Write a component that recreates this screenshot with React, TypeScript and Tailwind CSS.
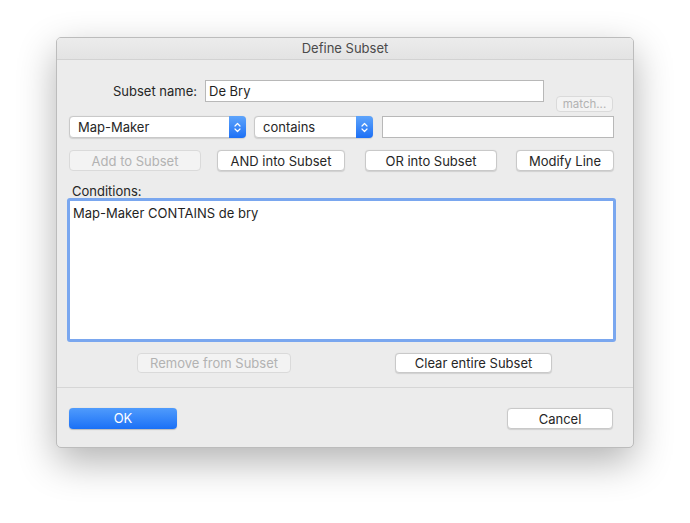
import React from "react";

function Btn({
  className = "",
  disabled = false,
  children,
}: {
  className?: string;
  disabled?: boolean;
  children: React.ReactNode;
}) {
  return (
    <div
      className={`flex items-center justify-center rounded-[4px] border pt-px leading-none ${
        disabled
          ? "border-[#dadada] bg-[#f3f3f3] text-[#b2b2b2]"
          : "border-[#c9c9c9] bg-white text-[#262626] shadow-[0_0.5px_1px_rgba(0,0,0,0.12)]"
      } ${className}`}
    >
      {children}
    </div>
  );
}

function Chevrons() {
  return (
    <svg width="7" height="11" viewBox="0 0 7 11" fill="none">
      <path d="M1 4 L3.5 1.5 L6 4" stroke="white" strokeWidth="1.2" strokeLinecap="round" strokeLinejoin="round" />
      <path d="M1 7 L3.5 9.5 L6 7" stroke="white" strokeWidth="1.2" strokeLinecap="round" strokeLinejoin="round" />
    </svg>
  );
}

function Popup({ className = "", label }: { className?: string; label: string }) {
  return (
    <div
      className={`flex h-[22px] items-stretch rounded-[4px] border border-[#c9c9c9] bg-white shadow-[0_0.5px_1px_rgba(0,0,0,0.12)] ${className}`}
    >
      <div className="flex flex-1 items-center pl-[8px] pt-px text-[13px] text-[#262626]">{label}</div>
      <div className="-my-px -mr-px flex w-[17px] items-center justify-center rounded-r-[4px] bg-gradient-to-b from-[#5ea4fb] to-[#1b6ff5]">
        <Chevrons />
      </div>
    </div>
  );
}

export default function App() {
  return (
    <div className="h-[523px] w-[690px] bg-white pl-[56px] pt-[37px] font-['Inter','Liberation_Sans',sans-serif] text-[13px]">
      <div className="flex h-[411px] w-[578px] flex-col overflow-hidden rounded-[5px] border border-[#bcbcbc] bg-[#ececec] shadow-[0_14px_38px_rgba(0,0,0,0.3)]">
        <div className="flex h-[22px] items-center justify-center border-b border-[#d2d2d2] bg-gradient-to-b from-[#ececec] to-[#e3e3e3] pt-px text-[13px] text-[#4a4a4a]">
          Define Subset
        </div>

        <div className="flex flex-col pl-[12px] pr-[19px]">
          <div className="mt-[20px] flex items-start">
            <div className="flex h-[22px] w-[128px] items-center justify-end pt-px text-[#262626]">Subset name:</div>
            <div className="ml-[8px] flex h-[22px] w-[339px] items-center border border-[#b8b8b8] bg-white pl-[3px] pt-px text-[#1f1f1f]">
              De Bry
            </div>
            <Btn disabled className="ml-[12px] mt-[16px] h-[16px] w-[57px] text-[11.5px]">
              match...
            </Btn>
          </div>

          <div className="mt-[4px] flex items-center">
            <Popup className="w-[177px]" label="Map-Maker" />
            <Popup className="ml-[8px] w-[119px]" label="contains" />
            <div className="ml-[9px] h-[22px] w-[232px] border border-[#b8b8b8] bg-white" />
          </div>

          <div className="mt-[12px] flex items-center">
            <Btn disabled className="h-[21px] w-[132px]">Add to Subset</Btn>
            <Btn className="ml-[16px] h-[21px] w-[128px]">AND into Subset</Btn>
            <Btn className="ml-[20px] h-[21px] w-[132px]">OR into Subset</Btn>
            <Btn className="ml-[19px] h-[21px] w-[98px]">Modify Line</Btn>
          </div>

          <div className="mt-[12px] h-[15px] pl-[3px] pt-px leading-[15px] text-[#262626]">Conditions:</div>

          <div className="-ml-[2px] h-[144px] w-[549px] rounded-[3px] border-[3px] border-[#7aa7ef] bg-white pl-[3px] pt-[4px] leading-[16px] text-[#1f1f1f]">
            Map-Maker CONTAINS de bry
          </div>

          <div className="mt-[11px] flex items-center">
            <Btn disabled className="ml-[68px] h-[20px] w-[154px]">Remove from Subset</Btn>
            <Btn className="ml-[104px] h-[20px] w-[157px]">Clear entire Subset</Btn>
          </div>
        </div>

        <div className="mt-[14px] h-px bg-[#d6d6d6]" />

        <div className="mt-[20px] flex items-center pl-[12px] pr-[20px]">
          <div className="flex h-[21px] w-[108px] items-center justify-center rounded-[4px] bg-gradient-to-b from-[#4f9bfc] to-[#1a70f6] pt-px text-white shadow-[0_0.5px_1px_rgba(0,0,0,0.2)]">
            OK
          </div>
          <Btn className="ml-auto h-[21px] w-[106px]">Cancel</Btn>
        </div>
      </div>
    </div>
  );
}
